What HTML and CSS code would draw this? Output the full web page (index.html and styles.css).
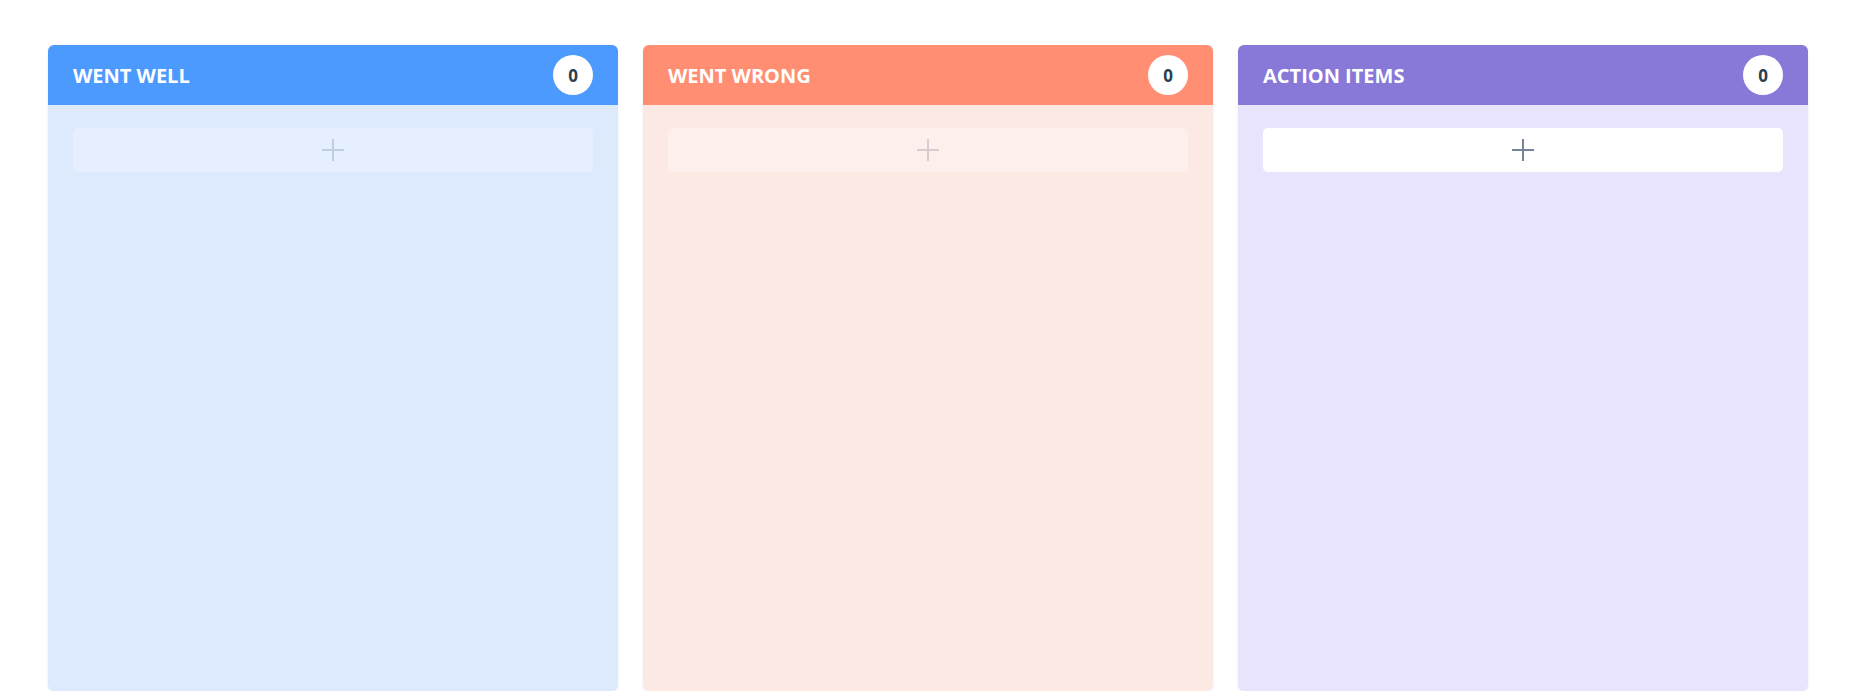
FILE: index.html
```html
<!DOCTYPE html>
<html>
<head>
<meta charset="utf-8">
<link rel="stylesheet" href="styles.css">
</head>
<body>
<div class="board">
  <section class="col col-well">
    <header class="col-head">
      <h2 class="col-title">WENT WELL</h2>
      <span class="badge">0</span>
    </header>
    <div class="col-body">
      <button class="add add-faded" aria-label="Add">
        <svg width="22" height="22" viewBox="0 0 22 22"><path d="M11 0V22M0 11H22" stroke="currentColor" stroke-width="2"/></svg>
      </button>
    </div>
  </section>
  <section class="col col-wrong">
    <header class="col-head">
      <h2 class="col-title">WENT WRONG</h2>
      <span class="badge">0</span>
    </header>
    <div class="col-body">
      <button class="add add-faded" aria-label="Add">
        <svg width="22" height="22" viewBox="0 0 22 22"><path d="M11 0V22M0 11H22" stroke="currentColor" stroke-width="2"/></svg>
      </button>
    </div>
  </section>
  <section class="col col-action">
    <header class="col-head">
      <h2 class="col-title">ACTION ITEMS</h2>
      <span class="badge">0</span>
    </header>
    <div class="col-body">
      <button class="add" aria-label="Add">
        <svg width="22" height="22" viewBox="0 0 22 22"><path d="M11 0V22M0 11H22" stroke="currentColor" stroke-width="2"/></svg>
      </button>
    </div>
  </section>
</div>
</body>
</html>
```
FILE: styles.css
```css
html, body {
  margin: 0;
  padding: 0;
  background: #ffffff;
  font-family: "Open Sans", "Noto Sans", sans-serif;
}

.board {
  display: grid;
  grid-template-columns: repeat(3, 570px);
  gap: 25px;
  padding: 45px 51px 0 48px;
}

.col {
  height: 646px;
  border-radius: 6px;
  overflow: hidden;
  display: flex;
  flex-direction: column;
  box-shadow: 0 1px 3px rgba(0, 0, 0, 0.08);
}

.col-head {
  height: 60px;
  display: flex;
  align-items: center;
  justify-content: space-between;
  padding: 0 25px;
  flex-shrink: 0;
}

.col-title {
  margin: 0;
  color: #ffffff;
  font-size: 20px;
  font-weight: 700;
  letter-spacing: 0;
}

.badge {
  width: 40px;
  height: 40px;
  border-radius: 50%;
  background: #ffffff;
  color: #2c3e50;
  font-size: 17px;
  font-weight: 700;
  display: flex;
  align-items: center;
  justify-content: center;
}

.col-body {
  flex: 1;
  padding: 23px 25px;
}

.add {
  width: 100%;
  height: 44px;
  border: none;
  border-radius: 5px;
  background: #ffffff;
  color: #76839a;
  display: flex;
  align-items: center;
  justify-content: center;
  padding: 0;
}

.add-faded {
  opacity: 0.28;
}

.col-well .col-head { background: #4d9aff; }
.col-well .col-body { background: #dde9fd; }

.col-wrong .col-head { background: #ff8e72; }
.col-wrong .col-body { background: #fde9e4; }

.col-action .col-head { background: #8878d8; }
.col-action .col-body { background: #e8e4fd; }
```
